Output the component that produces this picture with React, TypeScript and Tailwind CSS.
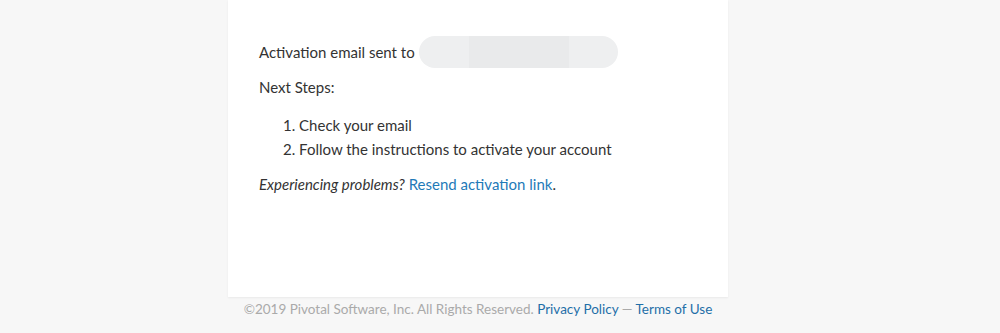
export default function App() {
  return (
    <div className="min-h-[333px] bg-[#f7f7f7] font-['Lato','Noto_Sans',sans-serif] text-[#333]">
      <div className="ml-[228px] w-[500px]">
        <div className="h-[297px] bg-white px-[31px] pt-[36px] shadow-[0_1px_2px_rgba(0,0,0,0.06)]">
          <div className="flex items-center h-[32px] text-[15px]">
            <span>Activation email sent to</span>
            <span className="relative ml-[4px] h-[32px] w-[199px] rounded-full bg-[#eeeff0] overflow-hidden">
              <span className="absolute left-[50px] top-0 h-full w-[100px] bg-[#e9eaeb]" />
            </span>
          </div>
          <p className="mt-[7px] text-[15px] leading-[24px]">Next Steps:</p>
          <ol className="mt-[14px] ml-[24px] list-decimal list-inside text-[15px] leading-[24px]">
            <li>Check your email</li>
            <li>Follow the instructions to activate your account</li>
          </ol>
          <p className="mt-[11px] text-[15px] leading-[24px]">
            <em>Experiencing problems?</em>{' '}
            <a href="#" className="text-[#1f7ab8]">Resend activation link</a>.
          </p>
        </div>
        <div className="pt-[2px] text-center text-[13.5px] leading-[20px] text-[#aaa]">
          ©2019 Pivotal Software, Inc. All Rights Reserved.{' '}
          <a href="#" className="text-[#1f6fa8]">Privacy Policy</a> —{' '}
          <a href="#" className="text-[#1f6fa8]">Terms of Use</a>
        </div>
      </div>
    </div>
  );
}
